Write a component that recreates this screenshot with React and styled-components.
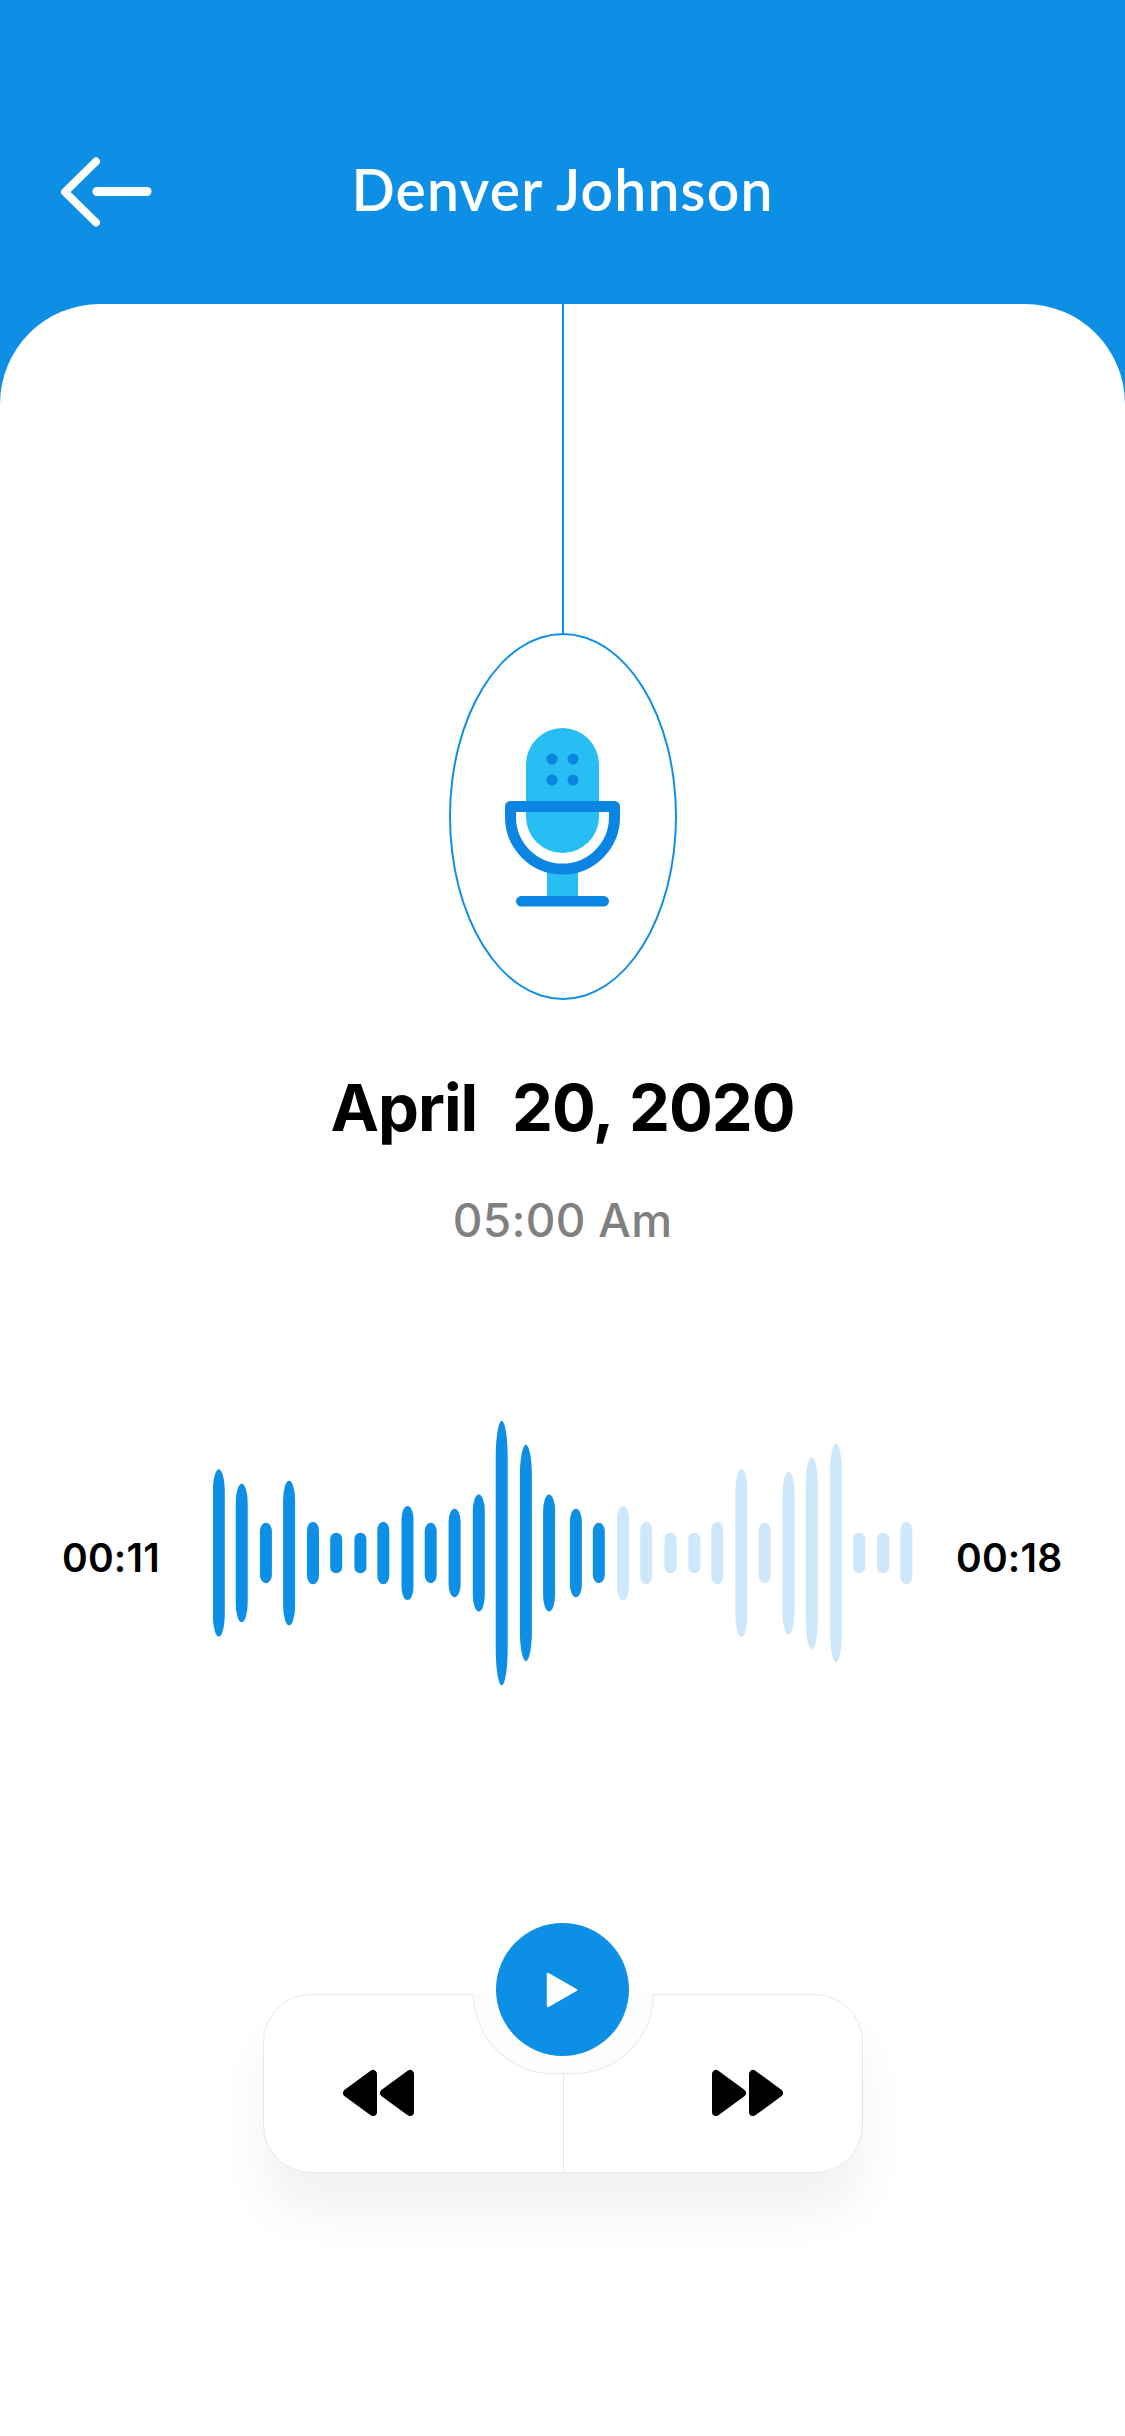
import React from "react";
import styled, { createGlobalStyle } from "styled-components";

const BLUE = "#0e8fe6";
const BORDER = "#e8e8e8";

const Global = createGlobalStyle`
  html, body { margin: 0; padding: 0; background: #fff; }
`;

const Screen = styled.div`
  width: 1125px;
  height: 2436px;
  background: ${BLUE};
  display: flex;
  flex-direction: column;
  overflow: hidden;
`;

const Header = styled.header`
  height: 304px;
  flex: none;
  display: grid;
  grid-template-columns: 1fr auto 1fr;
  align-items: center;
  padding: 80px 60px 0;
  box-sizing: border-box;
`;

const BackButton = styled.button`
  width: 94px;
  height: 70px;
  padding: 0;
  border: 0;
  background: none;
  display: block;
`;

const Title = styled.h1`
  margin: 0 0 6px;
  font: 600 57px/70px "Lato", sans-serif;
  letter-spacing: 1.2px;
  color: #fff;
`;

const Body = styled.main`
  flex: 1;
  background: #fff;
  border-radius: 100px 100px 0 0;
  display: flex;
  flex-direction: column;
  align-items: center;
`;

const Cord = styled.div`
  width: 2px;
  height: 329px;
  background: ${BLUE};
`;

const MicOval = styled.div`
  width: 228px;
  height: 367px;
  box-sizing: border-box;
  border: 2px solid ${BLUE};
  border-radius: 50%;
  display: flex;
  align-items: center;
  justify-content: center;
`;

const DateText = styled.h2`
  margin: 68px 0 0;
  font: 700 65px/80px "Inter", sans-serif;
  letter-spacing: -1px;
  word-spacing: 3px;
  color: #000;
  white-space: pre;
`;

const TimeText = styled.div`
  margin-top: 42px;
  font: 500 46px/60px "Inter", sans-serif;
  letter-spacing: 0.3px;
  color: #808080;
`;

const Player = styled.section`
  align-self: stretch;
  margin-top: 168px;
  padding-left: 62px;
  display: grid;
  grid-template-columns: 151px 700px 1fr;
  align-items: center;
`;

const Stamp = styled.span`
  margin: 9px 0 0 ${(p) => p.$indent || 0}px;
  font: 600 39px/48px "Inter", sans-serif;
  letter-spacing: 0.2px;
  color: #000;
`;

const Controls = styled.div`
  position: relative;
  width: 600px;
  height: 179px;
  margin-top: 306px;
  box-sizing: border-box;
  border: 1.5px solid ${BORDER};
  border-radius: 48px;
  background: #fff;
  box-shadow: 0 40px 50px rgba(0, 0, 0, 0.055);
  display: grid;
  grid-template-columns: 1fr 1fr;
`;

const Side = styled.button`
  padding: 74px 0 0 ${(p) => p.$inset}px;
  border: 0;
  border-left: ${(p) => (p.$divided ? `1.5px solid ${BORDER}` : "0")};
  background: none;
  display: flex;
  justify-content: flex-start;
  box-sizing: border-box;
`;

const Notch = styled.div`
  position: absolute;
  left: 209px;
  top: -1.5px;
  width: 181px;
  height: 80px;
  box-sizing: border-box;
  border: 1.5px solid ${BORDER};
  border-top: 0;
  border-radius: 0 0 90.5px 90.5px;
  background: #fdfdfd;
`;

const PlayButton = styled.button`
  position: absolute;
  left: 232px;
  top: -72px;
  width: 133px;
  height: 133px;
  padding: 0;
  border: 0;
  border-radius: 50%;
  background: ${BLUE};
  display: flex;
  align-items: center;
  justify-content: center;
`;

const BARS = [
  [217.8, 167.7], [240.7, 138.7], [264.9, 60.7], [288.1, 144.7], [312, 62.7],
  [335.2, 40.7], [359.4, 40.7], [382.3, 62.7], [406.5, 94], [429.7, 60.7],
  [453.6, 88.3], [477.8, 117], [500.7, 264.7], [524.9, 216.3], [548.1, 117],
  [574.9, 88.3], [597.8, 60.7], [622, 94, 1], [645.2, 62.7, 1], [669.5, 40.7, 1],
  [693.3, 40.7, 1], [716.2, 62.7, 1], [740.4, 168.7, 1], [763.6, 60.7, 1],
  [787.5, 163, 1], [810.7, 192, 1], [835, 219, 1], [858.2, 40.7, 1],
  [882.1, 40.7, 1], [905.3, 62.7, 1],
];

const BackIcon = () => (
  <svg width="94" height="70" viewBox="60 157 94 70" fill="none" stroke="#fff" strokeLinecap="round" strokeLinejoin="round">
    <path d="M96 161.500 L65 192 L96 222.500" strokeWidth="8" />
    <path d="M97 191.500 H147" strokeWidth="9" />
  </svg>
);

const MicIcon = () => (
  <svg width="120" height="184" viewBox="503 724 120 184">
    <rect x="526" y="727" width="73" height="125" rx="36.500" fill="#27bef3" />
    <rect x="547" y="868" width="31" height="30" fill="#27bef3" />
    <g fill="#0a86e2">
      <circle cx="552" cy="758" r="5.500" />
      <circle cx="573" cy="758" r="5.500" />
      <circle cx="552" cy="779" r="5.500" />
      <circle cx="573" cy="779" r="5.500" />
    </g>
    <path d="M510.500 805.500 H614.500 V816 A52 52 0 0 1 510.500 816 Z" fill="none" stroke="#0a86e2" strokeWidth="11" strokeLinejoin="round" />
    <rect x="516" y="895" width="93" height="10.500" rx="5.250" fill="#0a86e2" />
  </svg>
);

const Wave = () => (
  <svg width="700" height="270" viewBox="212 0 700 270">
    {BARS.map(([x, h, light]) => (
      <rect
        key={x}
        x={x - 6}
        y={135 - h / 2}
        width="12"
        height={h}
        rx="6"
        ry={Math.max(6, h * 0.14)}
        fill={light ? "#cde8fa" : BLUE}
      />
    ))}
  </svg>
);

const SkipIcon = ({ flip }) => (
  <svg width="72" height="48" viewBox="0 0 72 48" style={flip ? { transform: "scaleX(-1)" } : undefined}>
    <g fill="#000" stroke="#000" strokeWidth="8" strokeLinejoin="round">
      <path d="M4 24 L30 5 V43 Z" />
      <path d="M41 24 L67 5 V43 Z" />
    </g>
  </svg>
);

const PlayIcon = () => (
  <svg width="32" height="36" viewBox="0 0 32 36">
    <path d="M2 2 L30 18 L2 34 Z" fill="#fff" stroke="#fff" strokeWidth="2.500" strokeLinejoin="round" />
  </svg>
);

export default function App() {
  return (
    <Screen>
      <Global />
      <Header>
        <BackButton aria-label="Back"><BackIcon /></BackButton>
        <Title>Denver Johnson</Title>
      </Header>
      <Body>
        <Cord />
        <MicOval><MicIcon /></MicOval>
        <DateText>{"April  20, 2020"}</DateText>
        <TimeText>05:00 Am</TimeText>
        <Player>
          <Stamp>00:11</Stamp>
          <Wave />
          <Stamp $indent={43}>00:18</Stamp>
        </Player>
        <Controls>
          <Side $inset={79} aria-label="Rewind"><SkipIcon /></Side>
          <Side $inset={147} $divided aria-label="Forward"><SkipIcon flip /></Side>
          <Notch />
          <PlayButton aria-label="Play"><PlayIcon /></PlayButton>
        </Controls>
      </Body>
    </Screen>
  );
}
